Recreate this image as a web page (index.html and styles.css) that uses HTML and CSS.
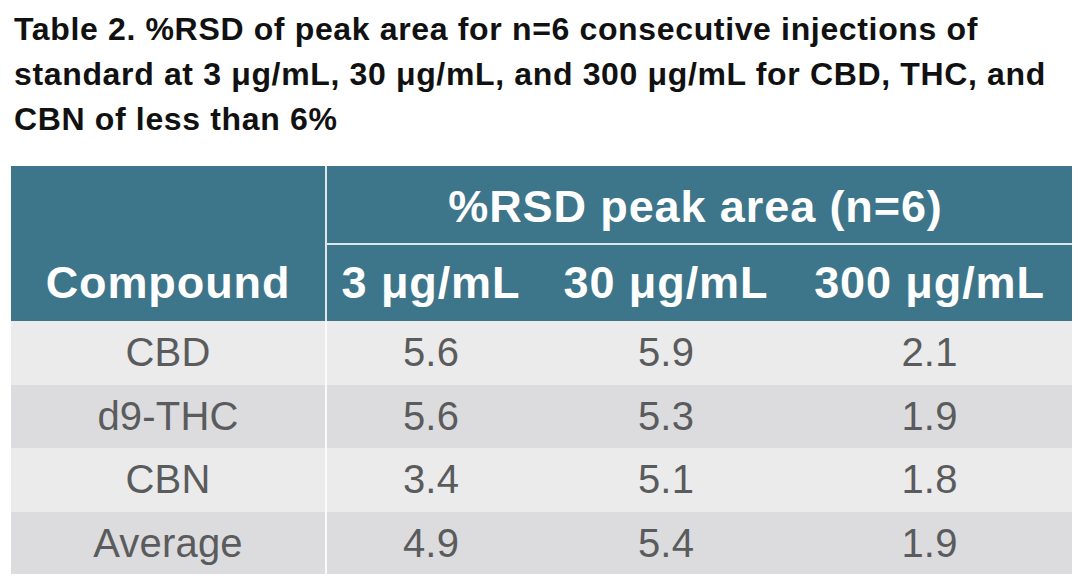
FILE: index.html
```html
<!DOCTYPE html>
<html lang="en">
<head>
<meta charset="utf-8">
<title>Table 2</title>
<link rel="stylesheet" href="styles.css">
</head>
<body>
<div class="page">
  <p class="caption">Table 2. %RSD of peak area for n=6 consecutive injections of<br>standard at 3 μg/mL, 30 μg/mL, and 300 μg/mL for CBD, THC, and<br>CBN of less than 6%</p>
  <div class="table" role="table">
    <div class="th compound" role="columnheader"><span>Compound</span></div>
    <div class="th group" role="columnheader">%RSD peak area (n=6)</div>
    <div class="th sub" role="columnheader">3 μg/mL</div>
    <div class="th sub" role="columnheader">30 μg/mL</div>
    <div class="th sub last" role="columnheader">300 μg/mL</div>

    <div class="td name odd">CBD</div>
    <div class="td odd">5.6</div>
    <div class="td odd">5.9</div>
    <div class="td odd last">2.1</div>

    <div class="td name even">d9-THC</div>
    <div class="td even">5.6</div>
    <div class="td even">5.3</div>
    <div class="td even last">1.9</div>

    <div class="td name odd">CBN</div>
    <div class="td odd">3.4</div>
    <div class="td odd">5.1</div>
    <div class="td odd last">1.8</div>

    <div class="td name even">Average</div>
    <div class="td even">4.9</div>
    <div class="td even">5.4</div>
    <div class="td even last">1.9</div>
  </div>
</div>
</body>
</html>
```

FILE: styles.css
```css
html, body {
  margin: 0;
  padding: 0;
  background: #ffffff;
}

.page {
  padding: 7px 0 0 11px;
  font-family: "Liberation Sans", Arial, sans-serif;
}

.caption {
  margin: 0 0 24px 3px;
  font-size: 32px;
  line-height: 45px;
  font-weight: 700;
  letter-spacing: 0.65px;
  color: #111111;
  white-space: nowrap;
}

.table {
  display: grid;
  width: 1061px;
  grid-template-columns: 316px 208px 262px 275px;
  grid-template-rows: 79px 76px 64px 63px 64px 62px;
}

.th {
  background: #3d768a;
  color: #ffffff;
  font-weight: 700;
  font-size: 45px;
  letter-spacing: 0.9px;
  text-align: center;
  box-sizing: border-box;
}

.compound {
  grid-row: 1 / 3;
  grid-column: 1;
  border-right: 2px solid #dfe6ea;
  display: flex;
  align-items: flex-end;
  justify-content: center;
}

.compound span {
  display: block;
  line-height: 76px;
}

.group {
  grid-row: 1;
  grid-column: 2 / 5;
  border-bottom: 2px solid #dfe6ea;
  line-height: 81px;
  padding-right: 8px;
}

.sub {
  line-height: 76px;
}

.last {
  padding-right: 10px;
}

.td {
  font-size: 40px;
  letter-spacing: 0.2px;
  color: #5a5b5d;
  text-align: center;
  line-height: 63px;
  box-sizing: border-box;
}

.td.name {
  border-right: 2px solid #fbfbfb;
}

.odd {
  background: #ebebeb;
}

.even {
  background: #dcdcde;
}
```
